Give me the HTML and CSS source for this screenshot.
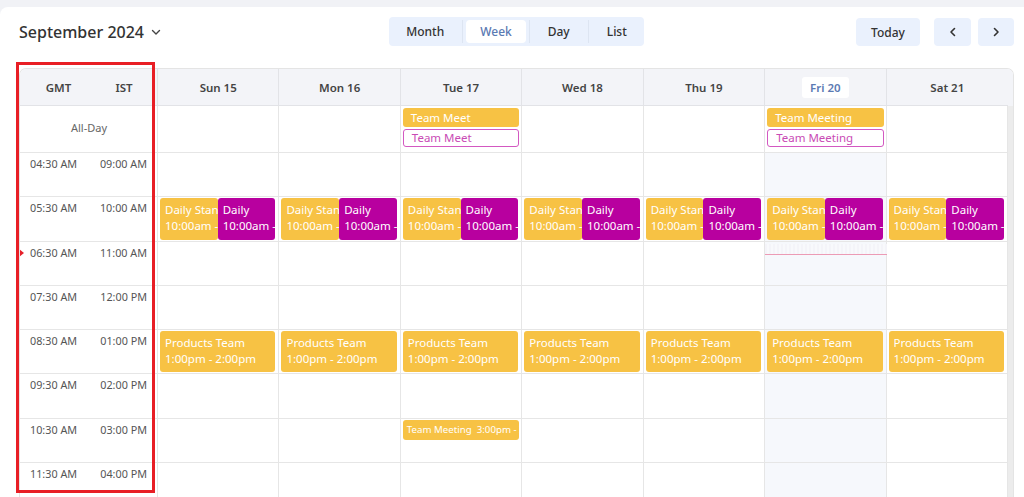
FILE: index.html
```html
<!DOCTYPE html>
<html lang="en">
<head>
    <meta charset="UTF-8">
    <meta name="viewport" content="width=device-width, initial-scale=1.0">
    <title>Week Calendar</title>
    <link rel="stylesheet" href="styles.css">
</head>
<body>
    <div class="card">
        <!-- Thanh công cụ -->
        <div class="toolbar">
            <div class="title">September 2024
                <svg class="caret" width="12" height="12" viewBox="0 0 12 12"><path d="M2.5 4.5 L6 8 L9.5 4.5" fill="none" stroke="#444" stroke-width="1.4" stroke-linecap="round" stroke-linejoin="round"/></svg>
            </div>
            <div class="views">
                <button class="view">Month</button>
                <span class="sep"></span>
                <button class="view active">Week</button>
                <span class="sep"></span>
                <button class="view">Day</button>
                <span class="sep"></span>
                <button class="view last">List</button>
            </div>
            <div class="nav">
                <button class="btn today-btn">Today</button>
                <button class="btn arrow"><svg width="12" height="12" viewBox="0 0 12 12"><path d="M7.5 2.5 L4 6 L7.5 9.5" fill="none" stroke="#333" stroke-width="1.6" stroke-linecap="round" stroke-linejoin="round"/></svg></button>
                <button class="btn arrow next"><svg width="12" height="12" viewBox="0 0 12 12"><path d="M4.5 2.5 L8 6 L4.5 9.5" fill="none" stroke="#333" stroke-width="1.6" stroke-linecap="round" stroke-linejoin="round"/></svg></button>
            </div>
        </div>

        <!-- Lịch tuần -->
        <div class="calendar">
            <div class="row head">
                <div class="cell tz"><span>GMT</span><span>IST</span></div>
                <div class="cell day">Sun 15</div>
                <div class="cell day">Mon 16</div>
                <div class="cell day">Tue 17</div>
                <div class="cell day">Wed 18</div>
                <div class="cell day">Thu 19</div>
                <div class="cell day"><span class="pill">Fri 20</span></div>
                <div class="cell day">Sat 21</div>
                <div class="gutter"></div>
            </div>

            <div class="row allday">
                <div class="cell label">All-Day</div>
                <div class="cell"></div>
                <div class="cell"></div>
                <div class="cell stack">
                    <div class="chip yellow">Team Meet</div>
                    <div class="chip outline">Team Meet</div>
                </div>
                <div class="cell"></div>
                <div class="cell"></div>
                <div class="cell stack">
                    <div class="chip yellow">Team Meeting</div>
                    <div class="chip outline">Team Meeting</div>
                </div>
                <div class="cell"></div>
                <div class="gutter"></div>
            </div>

            <div class="row hour">
                <div class="cell time"><span>04:30 AM</span><span>09:00 AM</span></div>
                <div class="cell"></div><div class="cell"></div><div class="cell"></div><div class="cell"></div><div class="cell"></div>
                <div class="cell cur"></div><div class="cell"></div>
                <div class="gutter"></div>
            </div>

            <div class="row hour">
                <div class="cell time"><span>05:30 AM</span><span>10:00 AM</span></div>
                <div class="cell pair"><div class="ev yellow"><b>Daily Standup</b><i>10:00am - 10:30am</i></div><div class="ev purple"><b>Daily</b><i>10:00am - 10:30am</i></div></div>
                <div class="cell pair"><div class="ev yellow"><b>Daily Standup</b><i>10:00am - 10:30am</i></div><div class="ev purple"><b>Daily</b><i>10:00am - 10:30am</i></div></div>
                <div class="cell pair"><div class="ev yellow"><b>Daily Standup</b><i>10:00am - 10:30am</i></div><div class="ev purple"><b>Daily</b><i>10:00am - 10:30am</i></div></div>
                <div class="cell pair"><div class="ev yellow"><b>Daily Standup</b><i>10:00am - 10:30am</i></div><div class="ev purple"><b>Daily</b><i>10:00am - 10:30am</i></div></div>
                <div class="cell pair"><div class="ev yellow"><b>Daily Standup</b><i>10:00am - 10:30am</i></div><div class="ev purple"><b>Daily</b><i>10:00am - 10:30am</i></div></div>
                <div class="cell pair cur"><div class="ev yellow"><b>Daily Standup</b><i>10:00am - 10:30am</i></div><div class="ev purple"><b>Daily</b><i>10:00am - 10:30am</i></div></div>
                <div class="cell pair"><div class="ev yellow"><b>Daily Standup</b><i>10:00am - 10:30am</i></div><div class="ev purple"><b>Daily</b><i>10:00am - 10:30am</i></div></div>
                <div class="gutter"></div>
            </div>

            <div class="row hour">
                <div class="cell time now"><span>06:30 AM</span><span>11:00 AM</span></div>
                <div class="cell"></div><div class="cell"></div><div class="cell"></div><div class="cell"></div><div class="cell"></div>
                <div class="cell cur"><div class="now-line"></div></div><div class="cell"></div>
                <div class="gutter"></div>
            </div>

            <div class="row hour">
                <div class="cell time"><span>07:30 AM</span><span>12:00 PM</span></div>
                <div class="cell"></div><div class="cell"></div><div class="cell"></div><div class="cell"></div><div class="cell"></div>
                <div class="cell cur"></div><div class="cell"></div>
                <div class="gutter"></div>
            </div>

            <div class="row hour">
                <div class="cell time"><span>08:30 AM</span><span>01:00 PM</span></div>
                <div class="cell pair"><div class="ev yellow"><b>Products Team</b><i>1:00pm - 2:00pm</i></div></div>
                <div class="cell pair"><div class="ev yellow"><b>Products Team</b><i>1:00pm - 2:00pm</i></div></div>
                <div class="cell pair"><div class="ev yellow"><b>Products Team</b><i>1:00pm - 2:00pm</i></div></div>
                <div class="cell pair"><div class="ev yellow"><b>Products Team</b><i>1:00pm - 2:00pm</i></div></div>
                <div class="cell pair"><div class="ev yellow"><b>Products Team</b><i>1:00pm - 2:00pm</i></div></div>
                <div class="cell pair cur"><div class="ev yellow"><b>Products Team</b><i>1:00pm - 2:00pm</i></div></div>
                <div class="cell pair"><div class="ev yellow"><b>Products Team</b><i>1:00pm - 2:00pm</i></div></div>
                <div class="gutter"></div>
            </div>

            <div class="row hour">
                <div class="cell time"><span>09:30 AM</span><span>02:00 PM</span></div>
                <div class="cell"></div><div class="cell"></div><div class="cell"></div><div class="cell"></div><div class="cell"></div>
                <div class="cell cur"></div><div class="cell"></div>
                <div class="gutter"></div>
            </div>

            <div class="row hour">
                <div class="cell time"><span>10:30 AM</span><span>03:00 PM</span></div>
                <div class="cell"></div><div class="cell"></div>
                <div class="cell pair slim"><div class="ev yellow small">Team Meeting&nbsp; 3:00pm - 3:30pm</div></div>
                <div class="cell"></div><div class="cell"></div>
                <div class="cell cur"></div><div class="cell"></div>
                <div class="gutter"></div>
            </div>

            <div class="row hour">
                <div class="cell time"><span>11:30 AM</span><span>04:00 PM</span></div>
                <div class="cell"></div><div class="cell"></div><div class="cell"></div><div class="cell"></div><div class="cell"></div>
                <div class="cell cur"></div><div class="cell"></div>
                <div class="gutter"></div>
            </div>
        </div>
    </div>

    <!-- khung đánh dấu cột múi giờ -->
    <div class="highlight"></div>
</body>
</html>
```

FILE: styles.css
```css
* {
    box-sizing: border-box;
}

body {
    margin: 0;
    height: 497px;
    overflow: hidden;
    position: relative;
    background-color: #f1f2f6;
    font-family: "Noto Sans", "Open Sans", sans-serif;
    color: #333;
}

.card {
    margin-top: 7px;
    height: 490px;
    background-color: #fff;
    border-radius: 8px 0 0 0;
}

/* toolbar */
.toolbar {
    display: grid;
    grid-template-columns: 1fr auto 1fr;
    align-items: start;
    height: 61px;
    padding: 10px 10px 0 19px;
}

.title {
    display: flex;
    align-items: center;
    gap: 6px;
    height: 29px;
    font-size: 16px;
    font-weight: 500;
    color: #333;
}

.caret {
    margin-top: 1px;
}

.views {
    display: flex;
    align-items: center;
    height: 29px;
    background-color: #eaf1fd;
    border-radius: 4px;
}

.view {
    border: 0;
    background: none;
    font-family: inherit;
    font-size: 12px;
    font-weight: 500;
    color: #333;
    height: 23px;
    padding: 0 18px;
    border-radius: 4px;
    cursor: pointer;
}

.view:first-child {
    padding: 0 18px 0 17px;
}

.view.last {
    padding: 0 17px 0 18px;
}

.view.active {
    background-color: #fff;
    color: #5b7ab3;
    padding: 0 14px;
    margin: 0 3px;
}

.sep {
    width: 1px;
    height: 23px;
    background-color: #dde5f2;
}

.nav {
    display: flex;
    justify-content: flex-end;
    padding-top: 1px;
}

.btn {
    border: 0;
    height: 28px;
    background-color: #eaf1fd;
    border-radius: 4px;
    font-family: inherit;
    font-size: 12px;
    font-weight: 500;
    color: #333;
    cursor: pointer;
}

.today-btn {
    width: 64px;
    margin-right: 14px;
}

.arrow {
    width: 37px;
    display: flex;
    align-items: center;
    justify-content: center;
}

.arrow.next {
    width: 36px;
    margin-left: 7px;
}

/* calendar grid */
.calendar {
    margin-left: 19px;
    width: 995px;
    border: 1px solid #e4e4e4;
    border-bottom: 0;
    border-radius: 7px 7px 0 0;
    overflow: hidden;
}

.row {
    display: grid;
    grid-template-columns: 138px repeat(7, 1fr) 5px;
}

.cell {
    position: relative;
    border-right: 1px solid #e6e6e6;
    border-bottom: 1px solid #e6e6e6;
    min-width: 0;
}

.head {
    height: 37px;
    background-color: #f3f4f8;
}

.head .cell {
    border-right-color: #e2e3e7;
    border-bottom-color: #e2e3e7;
    display: flex;
    align-items: center;
    justify-content: center;
    font-size: 11.5px;
    font-weight: 600;
    color: #444;
}

.head .day:nth-child(8) {
    border-right: 0;
}

.head .tz {
    justify-content: flex-start;
}

.tz span {
    width: 66px;
    text-align: center;
    padding-left: 11px;
}

.tz span + span {
    width: 70px;
    padding-left: 6px;
}

.pill {
    background-color: #fff;
    color: #5b7ab3;
    padding: 3px 8px;
    border-radius: 3px;
}

.gutter {
    background-color: #fff;
}

.head .gutter {
    background-color: #f3f4f8;
}

.row:not(.head) .gutter {
    background-color: #ececec;
}

.allday {
    height: 47px;
}

.label {
    display: flex;
    align-items: center;
    justify-content: center;
    font-size: 11px;
    color: #666;
    padding: 0 0 4px 1px;
}

.stack {
    display: flex;
    flex-direction: column;
    gap: 2px;
    padding: 2px 2px 0 2px;
}

.chip {
    height: 19px;
    border-radius: 3px;
    font-size: 11.5px;
    line-height: 19px;
    padding-left: 8px;
    white-space: nowrap;
    overflow: hidden;
}

.chip.yellow {
    background-color: #f7c244;
    color: #fff;
}

.chip.outline {
    height: 18px;
    line-height: 16px;
    border: 1px solid #d358c1;
    color: #c94bb5;
    background-color: #fff;
}

.hour {
    height: 44.25px;
}

.time {
    display: flex;
    justify-content: space-between;
    padding: 3px 10px 0 10px;
    font-size: 10.8px;
    color: #555;
}

.time.now::before {
    content: "";
    position: absolute;
    z-index: 2;
    left: -1px;
    top: 7px;
    border-top: 4px solid transparent;
    border-bottom: 4px solid transparent;
    border-left: 5px solid #e5202a;
}

.cur {
    background-color: #f6f8fc;
}

.now-line {
    position: absolute;
    left: 0;
    right: -1px;
    top: 2px;
    height: 11px;
    background: repeating-linear-gradient(90deg, #f4f4f9 0 2px, #f8f9fc 2px 4px);
    border-bottom: 1px solid #ec9bb5;
}

.pair {
    display: flex;
    padding: 1px 3px 1px 2px;
}

.pair.slim {
    padding-right: 2px;
}

.ev {
    flex: 1;
    min-width: 0;
    border-radius: 3px;
    padding: 4px 0 0 5px;
    color: #fff;
    font-size: 11.5px;
    line-height: 16px;
    overflow: hidden;
    white-space: nowrap;
}

.ev b,
.ev i {
    display: block;
    font-weight: 400;
    font-style: normal;
    overflow: hidden;
}

.ev.yellow {
    background-color: #f7c244;
}

.ev.purple {
    background-color: #b8009f;
}

.ev.small {
    flex: 1;
    height: 20px;
    padding: 0 0 0 4px;
    font-size: 9.7px;
    line-height: 20px;
}

/* annotation box */
.highlight {
    position: absolute;
    z-index: 1;
    left: 16px;
    top: 62px;
    width: 139px;
    height: 431px;
    border: 3px solid #e81e25;
    pointer-events: none;
}
```
